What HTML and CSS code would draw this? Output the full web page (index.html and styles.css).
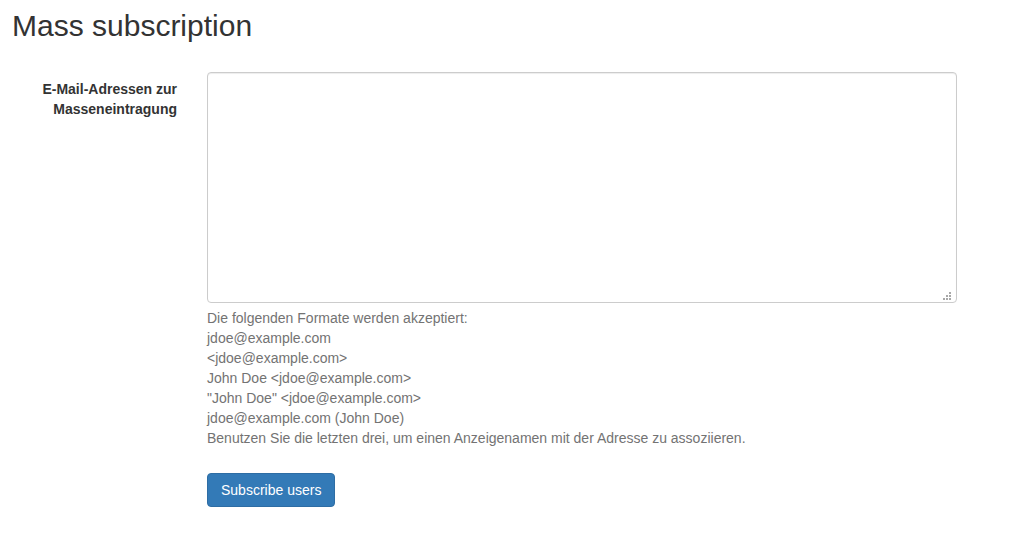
FILE: index.html
```html
<!DOCTYPE html>
<html lang="de">
<head>
<meta charset="utf-8">
<title>Mass subscription</title>
<link rel="stylesheet" href="styles.css">
</head>
<body>
<div class="page">
  <h2 class="title">Mass subscription</h2>
  <form class="form">
    <div class="form-group">
      <label class="control-label" for="emails">E-Mail-Adressen zur Masseneintragung</label>
      <div class="control">
        <div class="textarea-wrap">
          <textarea id="emails" class="form-control"></textarea>
          <span class="grip" aria-hidden="true"></span>
        </div>
        <p class="help-block">Die folgenden Formate werden akzeptiert:<br>jdoe@example.com<br>&lt;jdoe@example.com&gt;<br>John Doe &lt;jdoe@example.com&gt;<br>"John Doe" &lt;jdoe@example.com&gt;<br>jdoe@example.com (John Doe)<br>Benutzen Sie die letzten drei, um einen Anzeigenamen mit der Adresse zu assoziieren.</p>
      </div>
    </div>
    <div class="form-group">
      <div class="spacer"></div>
      <div class="control">
        <button type="button" class="btn">Subscribe users</button>
      </div>
    </div>
  </form>
</div>
</body>
</html>
```
FILE: styles.css
```css
* { box-sizing: border-box; }
html, body {
  margin: 0;
  padding: 0;
  background: #fff;
  font-family: "Liberation Sans", Arial, sans-serif;
  font-size: 14px;
  line-height: 20px;
  color: #333;
}
.page {
  padding: 0 0 0 12px;
}
.title {
  margin: 9px 0 0 0;
  font-size: 30px;
  font-weight: 500;
  line-height: 33px;
  color: #333;
}
.form {
  margin-top: 30px;
}
.form-group {
  display: grid;
  grid-template-columns: 180px 780px;
  margin-bottom: 15px;
}
.control-label {
  padding: 7px 15px 0 0;
  text-align: right;
  font-weight: bold;
}
.control {
  padding: 0 15px;
}
.textarea-wrap {
  position: relative;
}
.form-control {
  display: block;
  width: 100%;
  height: 231px;
  margin: 0;
  padding: 6px 12px;
  font-family: inherit;
  font-size: 14px;
  line-height: 20px;
  color: #555;
  background: #fff;
  border: 1px solid #ccc;
  border-radius: 4px;
  box-shadow: inset 0 1px 1px rgba(0,0,0,.075);
  resize: none;
}
.grip {
  position: absolute;
  right: 6px;
  bottom: 3px;
  width: 8px;
  height: 8px;
  background:
    radial-gradient(circle, #a8a8a8 0 1px, transparent 1px) 6px 0 / 2px 2px no-repeat,
    radial-gradient(circle, #a8a8a8 0 1px, transparent 1px) 3px 3px / 2px 2px no-repeat,
    radial-gradient(circle, #a8a8a8 0 1px, transparent 1px) 6px 3px / 2px 2px no-repeat,
    radial-gradient(circle, #a8a8a8 0 1px, transparent 1px) 0 6px / 2px 2px no-repeat,
    radial-gradient(circle, #a8a8a8 0 1px, transparent 1px) 3px 6px / 2px 2px no-repeat,
    radial-gradient(circle, #a8a8a8 0 1px, transparent 1px) 6px 6px / 2px 2px no-repeat;
  pointer-events: none;
}
.help-block {
  margin: 5px 0 10px;
  color: #737373;
}
.btn {
  display: inline-block;
  padding: 6px 13px;
  font-family: inherit;
  font-size: 14px;
  line-height: 20px;
  color: #fff;
  background: #337ab7;
  border: 1px solid #2e6da4;
  border-radius: 4px;
  cursor: pointer;
}
```
